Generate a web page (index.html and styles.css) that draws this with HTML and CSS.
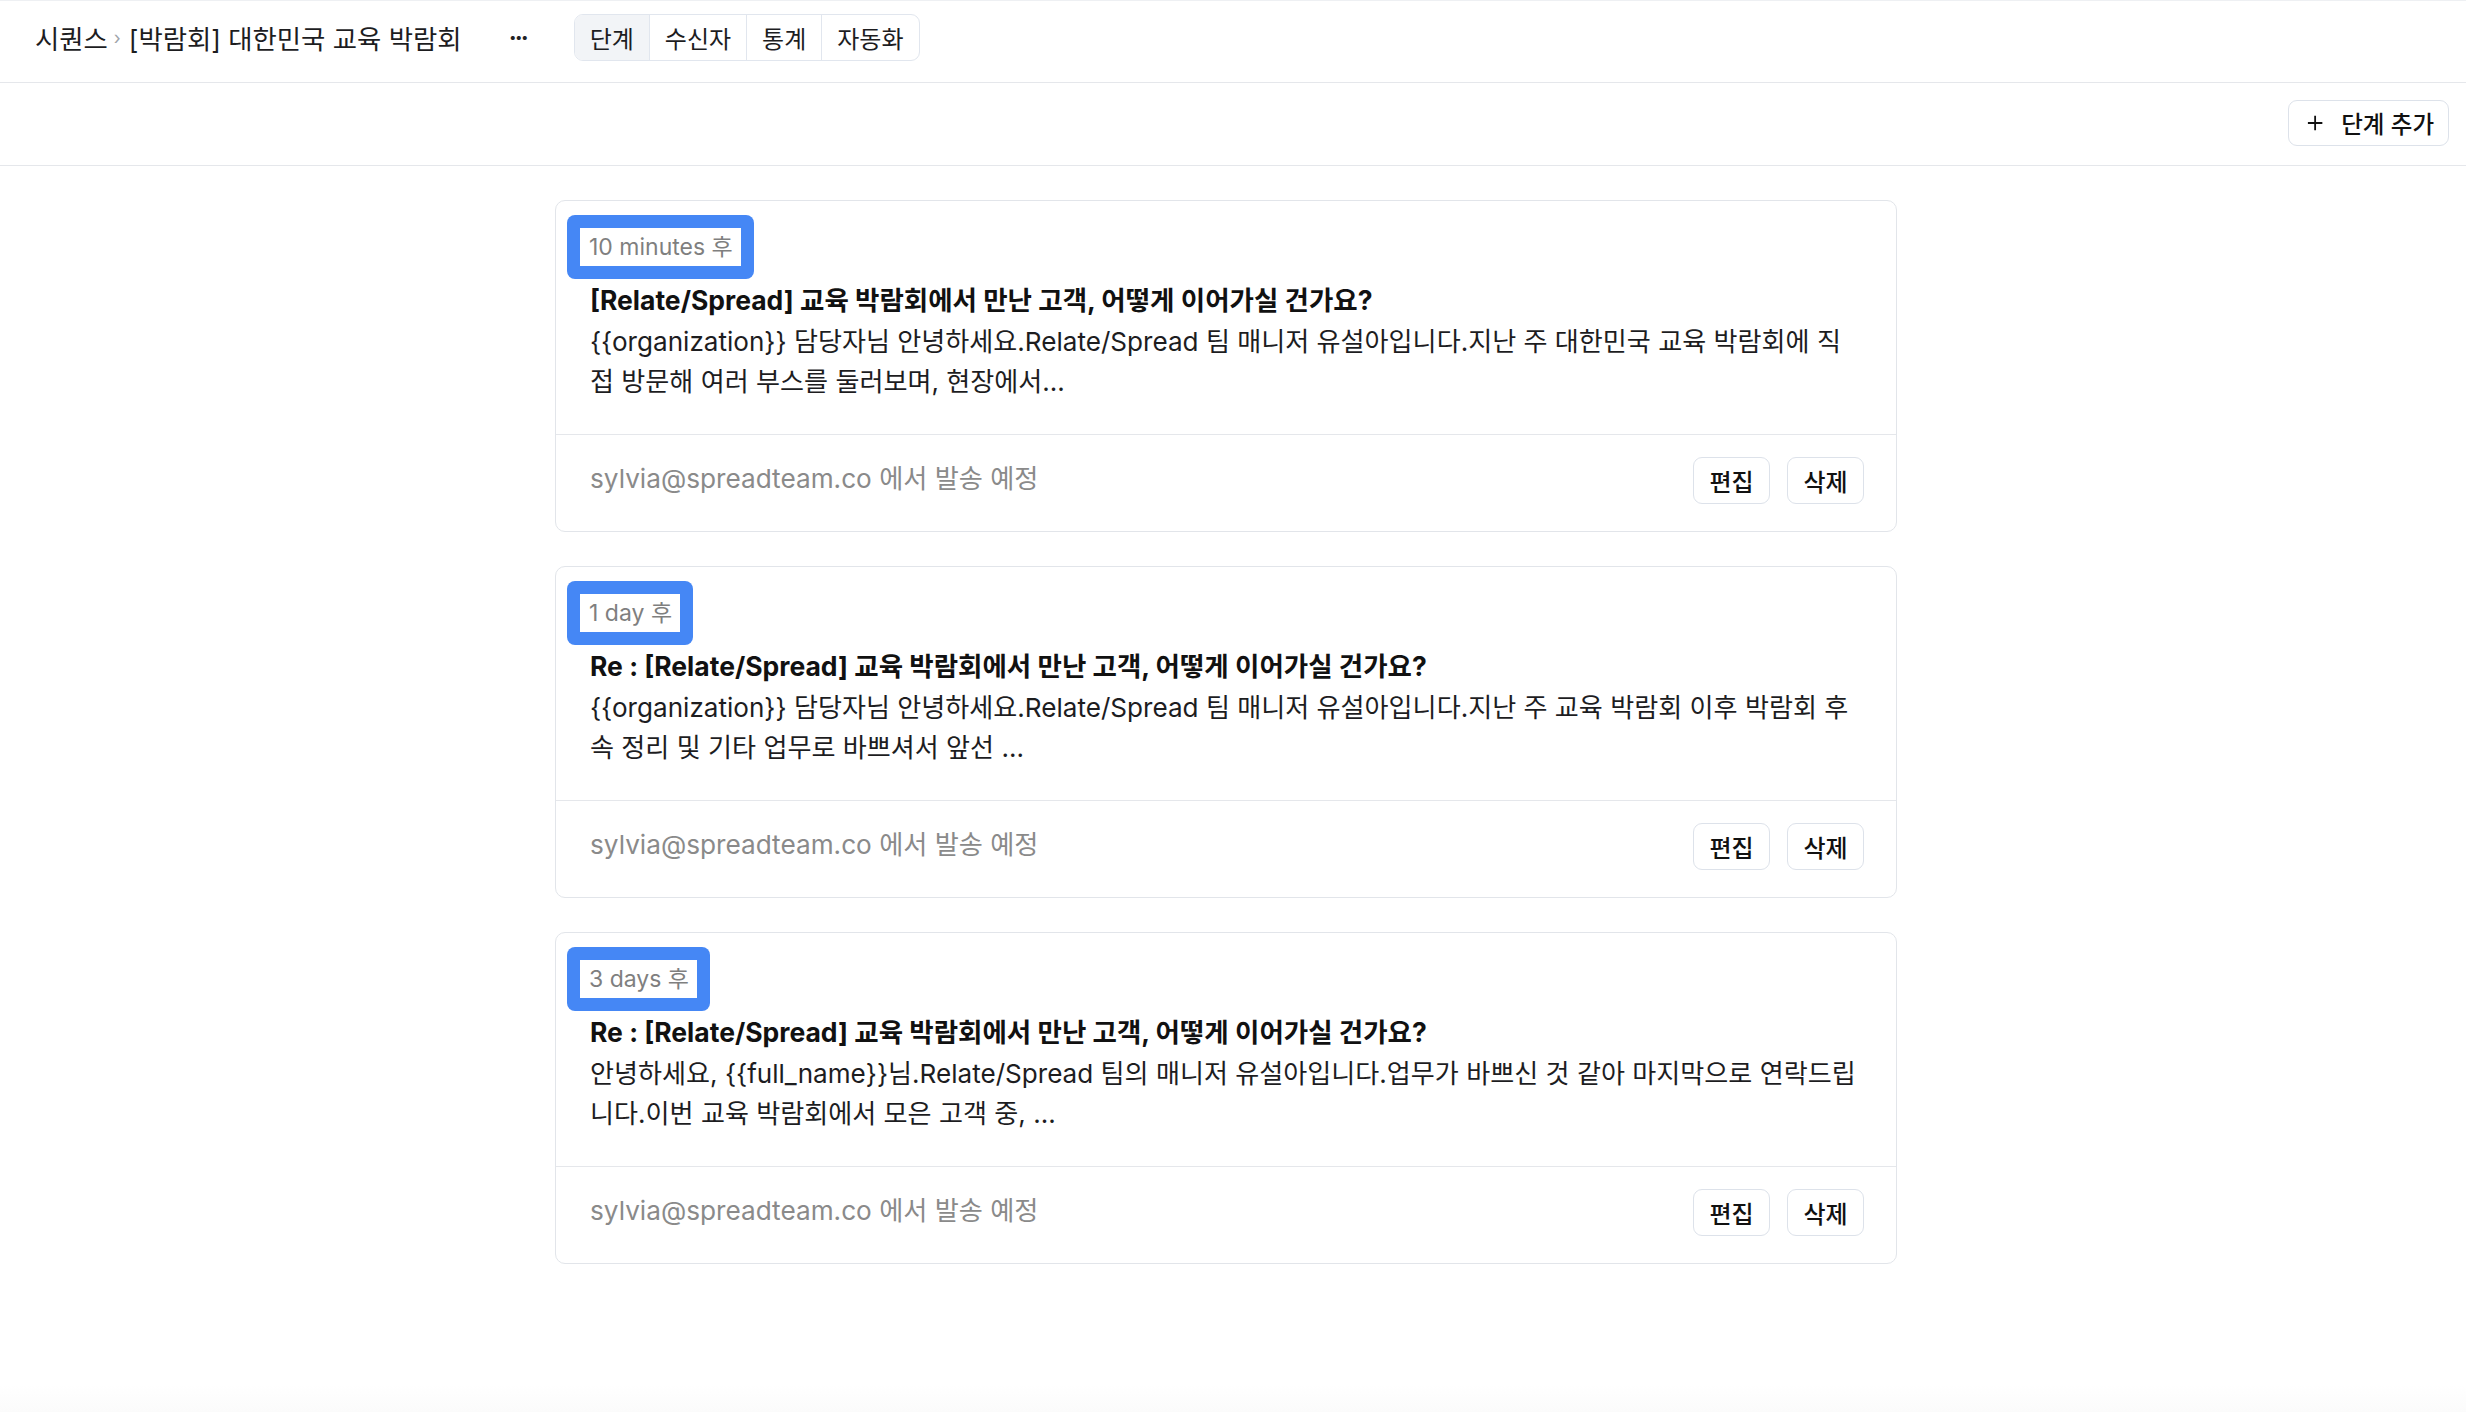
FILE: index.html
```html
<!DOCTYPE html>
<html lang="ko">
<head>
<meta charset="utf-8">
<title>시퀀스</title>
<link rel="stylesheet" href="styles.css">
</head>
<body>
<header class="topbar">
  <nav class="crumbs">
    <span class="crumb">시퀀스</span>
    <span class="crumb-sep">›</span>
    <span class="crumb">[박람회] 대한민국 교육 박람회</span>
  </nav>
  <button class="more" type="button">···</button>
  <div class="tabs">
    <span class="tab active">단계</span>
    <span class="tab">수신자</span>
    <span class="tab">통계</span>
    <span class="tab">자동화</span>
  </div>
</header>

<div class="toolbar">
  <button class="add-btn" type="button">
    <svg class="plus" width="18" height="18" viewBox="0 0 18 18" aria-hidden="true"><path d="M9 1v16M1 9h16" stroke="#111" stroke-width="2" fill="none"/></svg>
    <span>단계 추가</span>
  </button>
</div>

<main class="steps">
  <article class="card">
    <div class="card-body">
      <span class="delay-hl"><span class="delay">10 minutes 후</span></span>
      <h3 class="subject">[Relate/Spread] 교육 박람회에서 만난 고객, 어떻게 이어가실 건가요?</h3>
      <p class="preview">{{organization}} 담당자님 안녕하세요.Relate/Spread 팀 매니저 유설아입니다.지난 주 대한민국 교육 박람회에 직접 방문해 여러 부스를 둘러보며, 현장에서...</p>
    </div>
    <div class="card-foot">
      <span class="sender">sylvia@spreadteam.co 에서 발송 예정</span>
      <div class="actions">
        <button class="btn" type="button">편집</button>
        <button class="btn" type="button">삭제</button>
      </div>
    </div>
  </article>

  <article class="card">
    <div class="card-body">
      <span class="delay-hl"><span class="delay">1 day 후</span></span>
      <h3 class="subject">Re : [Relate/Spread] 교육 박람회에서 만난 고객, 어떻게 이어가실 건가요?</h3>
      <p class="preview">{{organization}} 담당자님 안녕하세요.Relate/Spread 팀 매니저 유설아입니다.지난 주 교육 박람회 이후 박람회 후속 정리 및 기타 업무로 바쁘셔서 앞선 ...</p>
    </div>
    <div class="card-foot">
      <span class="sender">sylvia@spreadteam.co 에서 발송 예정</span>
      <div class="actions">
        <button class="btn" type="button">편집</button>
        <button class="btn" type="button">삭제</button>
      </div>
    </div>
  </article>

  <article class="card">
    <div class="card-body">
      <span class="delay-hl"><span class="delay">3 days 후</span></span>
      <h3 class="subject">Re : [Relate/Spread] 교육 박람회에서 만난 고객, 어떻게 이어가실 건가요?</h3>
      <p class="preview">안녕하세요, {{full_name}}님.Relate/Spread 팀의 매니저 유설아입니다.업무가 바쁘신 것 같아 마지막으로 연락드립니다.이번 교육 박람회에서 모은 고객 중, ...</p>
    </div>
    <div class="card-foot">
      <span class="sender">sylvia@spreadteam.co 에서 발송 예정</span>
      <div class="actions">
        <button class="btn" type="button">편집</button>
        <button class="btn" type="button">삭제</button>
      </div>
    </div>
  </article>
</main>
</body>
</html>
```

FILE: styles.css
```css
* { box-sizing: border-box; }

html, body {
  margin: 0;
  padding: 0;
  background: #fff;
}

body {
  font-family: Inter, "Noto Sans CJK KR", sans-serif;
  color: #111;
  min-height: 1412px;
  background: linear-gradient(to bottom, #fff 0, #fff 1385px, #fbfbfb 1412px);
}

button {
  font-family: inherit;
  cursor: pointer;
}

/* ---------- top bar ---------- */
.topbar {
  height: 83px;
  border-top: 1px solid #eef0f3;
  border-bottom: 1px solid #e5e7eb;
  display: flex;
  align-items: center;
  padding: 0 0 8px 35px;
  gap: 47px;
}

.crumbs {
  display: flex;
  align-items: center;
  font-size: 26.4px;
  color: #1d1d1f;
  white-space: nowrap;
}

.crumb-sep {
  color: #a0a4aa;
  font-size: 18px;
  margin: 0 8px 0 6px;
}

.more {
  border: 0;
  background: none;
  padding: 0;
  font-size: 24px;
  font-weight: 700;
  color: #222;
  letter-spacing: -2px;
}

.tabs {
  display: flex;
  height: 47px;
  border: 1px solid #e1e6ee;
  border-radius: 9px;
  overflow: hidden;
}

.tab {
  display: flex;
  align-items: center;
  padding: 0 15px;
  font-size: 24px;
  color: #1d1d1f;
  border-left: 1px solid #e1e6ee;
}

.tab:first-child { border-left: 0; }

.tab.active { background: #f2f4f7; }

/* ---------- toolbar ---------- */
.toolbar {
  height: 83px;
  border-bottom: 1px solid #e5e7eb;
  display: flex;
  align-items: center;
  justify-content: flex-end;
  padding: 0 17px 3px 0;
}

.add-btn {
  display: flex;
  align-items: center;
  gap: 18px;
  height: 46px;
  width: 161px;
  padding: 0 14px 0 18px;
  border: 1px solid #dde2ea;
  border-radius: 9px;
  background: #fff;
  font-size: 23.5px;
  font-weight: 500;
  color: #111;
  white-space: nowrap;
}

/* ---------- steps ---------- */
.steps {
  display: flex;
  flex-direction: column;
  align-items: center;
  gap: 34px;
  padding: 34px 14px 0 0;
}

.card {
  width: 1342px;
  border: 1px solid #e2e5ea;
  border-radius: 10px;
  background: #fff;
}

.card-body {
  padding: 14px 33px 32px 34px;
}

.delay-hl {
  display: inline-block;
  margin-left: -23px;
  padding: 13px;
  background: #4587f5;
  border-radius: 8px;
}

.delay {
  display: block;
  height: 38px;
  line-height: 38px;
  padding: 0 8px 0 9px;
  background: #fff;
  font-size: 23px;
  color: #7f7f7f;
  white-space: nowrap;
}

.subject {
  margin: 1px 0 0;
  font-size: 26.5px;
  font-weight: 700;
  line-height: 40px;
  color: #111;
}

.preview {
  margin: 2px 0 0;
  font-size: 26.1px;
  line-height: 40px;
  color: #1d1d1f;
}

.card-foot {
  height: 97px;
  border-top: 1px solid #e5e7eb;
  display: flex;
  align-items: center;
  justify-content: space-between;
  padding: 0 32px 5px 34px;
}

.sender {
  font-size: 26.2px;
  color: #8a8a8a;
  margin-top: -8px;
}

.actions {
  display: flex;
  gap: 17px;
}

.btn {
  width: 77px;
  height: 47px;
  border: 1px solid #dde2ea;
  border-radius: 9px;
  background: #fff;
  font-size: 24px;
  font-weight: 500;
  color: #111;
  padding: 0;
}
```
